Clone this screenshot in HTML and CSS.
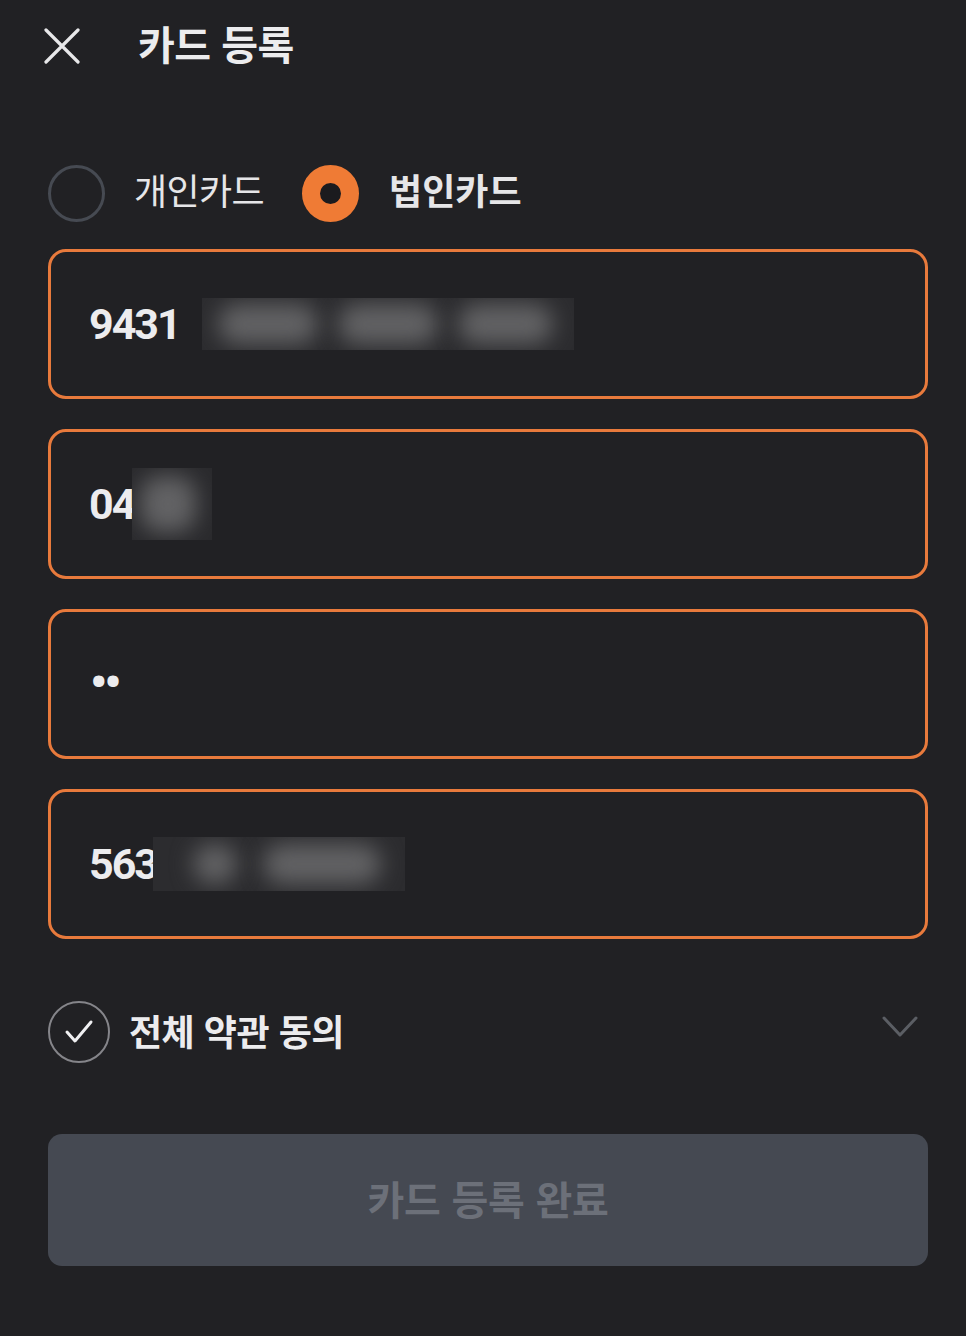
FILE: index.html
```html
<!DOCTYPE html>
<html lang="ko">
<head>
<meta charset="utf-8">
<title>카드 등록</title>
<link rel="stylesheet" href="styles.css">
</head>
<body>
<div class="page">
  <header class="topbar">
    <button class="close" aria-label="닫기">
      <svg width="36" height="36" viewBox="0 0 36 36"><path d="M2 2 L34 34 M34 2 L2 34" stroke="#e8e8ea" stroke-width="3.2" stroke-linecap="round" fill="none"/></svg>
    </button>
    <h1 class="title">카드 등록</h1>
  </header>

  <div class="radios">
    <label class="radio">
      <span class="dot off"></span>
      <span class="rlabel">개인카드</span>
    </label>
    <label class="radio">
      <span class="dot on"></span>
      <span class="rlabel bold">법인카드</span>
    </label>
  </div>

  <div class="fields">
    <div class="field">
      <span class="val">9431</span>
      <span class="blur b1"><i class="blob" style="width:100px"></i><i class="blob" style="width:100px"></i><i class="blob" style="width:95px"></i></span>
    </div>
    <div class="field">
      <span class="val">04</span>
      <span class="blur b2"><i class="blob" style="width:56px"></i></span>
    </div>
    <div class="field">
      <span class="val dots">••</span>
    </div>
    <div class="field">
      <span class="val">563</span>
      <span class="blur b4"><i class="blob" style="width:44px"></i><i class="blob" style="width:118px"></i></span>
    </div>
  </div>

  <div class="agree">
    <span class="check">
      <svg width="34" height="34" viewBox="0 0 34 34"><path d="M5 17 L13 26 L29 7" stroke="#f0f0f2" stroke-width="3" stroke-linecap="round" stroke-linejoin="round" fill="none"/></svg>
    </span>
    <span class="agree-text">전체 약관 동의</span>
    <svg class="chev" width="36" height="22" viewBox="0 0 36 22"><path d="M2 2 L18 19 L34 2" stroke="#5b5e64" stroke-width="3" stroke-linecap="round" stroke-linejoin="round" fill="none"/></svg>
  </div>

  <button class="submit">카드 등록 완료</button>
</div>
</body>
</html>
```

FILE: styles.css
```css
* { box-sizing: border-box; }
html, body {
  margin: 0;
  padding: 0;
  background: #212124;
}
body {
  font-family: "Roboto", "Noto Sans CJK KR", sans-serif;
  color: #ececee;
}
.page {
  width: 966px;
  height: 1336px;
  padding: 0 38px 0 48px;
  display: flex;
  flex-direction: column;
}
.topbar {
  display: flex;
  align-items: center;
  height: 92px;
}
.close {
  background: none;
  border: 0;
  padding: 0;
  width: 36px;
  height: 36px;
  margin-left: -4px;
  display: flex;
}
.title {
  margin: 0 0 6px 58px;
  font-family: "Noto Sans CJK KR", sans-serif;
  font-weight: 700;
  font-size: 40px;
  letter-spacing: -0.5px;
  color: #ececee;
}
.radios {
  display: flex;
  align-items: center;
  margin-top: 72px;
  height: 58px;
}
.radio {
  display: flex;
  align-items: center;
}
.radio + .radio { margin-left: 38px; }
.dot {
  width: 57px;
  height: 57px;
  border-radius: 50%;
  display: block;
  flex: none;
}
.dot.off {
  border: 3px solid #464a52;
}
.dot.on {
  border: 18px solid #ef7b35;
  background: #1b1b1e;
}
.rlabel {
  margin-left: 29px;
  font-family: "Noto Sans CJK KR", sans-serif;
  font-size: 36px;
  font-weight: 400;
  color: #e6e6e8;
  letter-spacing: -0.6px;
  margin-top: -8px;
}
.rlabel.bold { font-weight: 700; margin-left: 30px; letter-spacing: 0; }
.fields {
  margin-top: 27px;
  display: flex;
  flex-direction: column;
  gap: 30px;
}
.field {
  height: 150px;
  border: 3px solid #e87a3c;
  border-radius: 18px;
  display: flex;
  align-items: center;
  padding-left: 38px;
}
.val {
  font-family: "Roboto", sans-serif;
  font-weight: 700;
  font-size: 43px;
  letter-spacing: -2px;
  color: #ececee;
}
.val.dots {
  font-size: 48px;
  letter-spacing: -3px;
  margin-top: -4px;
  margin-left: 1px;
}
.blur {
  display: flex;
  align-items: center;
  background: #2c2c2f;
  overflow: hidden;
  gap: 20px;
}
.blob {
  display: block;
  height: 40px;
  border-radius: 20px;
  background: #626264;
  filter: blur(11px);
}
.b1 { height: 52px; width: 372px; padding-left: 16px; margin-left: 22px; }
.b2 { height: 72px; width: 80px; padding-left: 8px; margin-left: -2px; background: #2a2a2d; }
.b2 .blob { height: 56px; }
.b4 { height: 54px; width: 252px; padding-left: 40px; margin-left: -4px; gap: 26px; }
.agree {
  display: flex;
  align-items: center;
  margin-top: 62px;
  height: 62px;
  padding-right: 10px;
}
.check {
  width: 62px;
  height: 62px;
  border-radius: 50%;
  border: 2px solid #85858a;
  display: flex;
  align-items: center;
  justify-content: center;
  flex: none;
}
.agree-text {
  margin-left: 19px;
  font-family: "Noto Sans CJK KR", sans-serif;
  font-weight: 700;
  font-size: 36px;
  letter-spacing: -0.5px;
  color: #ececee;
  margin-top: -4px;
  flex: 1;
}
.chev { margin-top: -10px; }
.submit {
  margin-top: 71px;
  height: 132px;
  width: 100%;
  border: 0;
  border-radius: 14px;
  background: #454952;
  color: #6c7079;
  font-family: "Noto Sans CJK KR", sans-serif;
  font-weight: 700;
  font-size: 40px;
  letter-spacing: -0.3px;
  padding-bottom: 6px;
}
```
